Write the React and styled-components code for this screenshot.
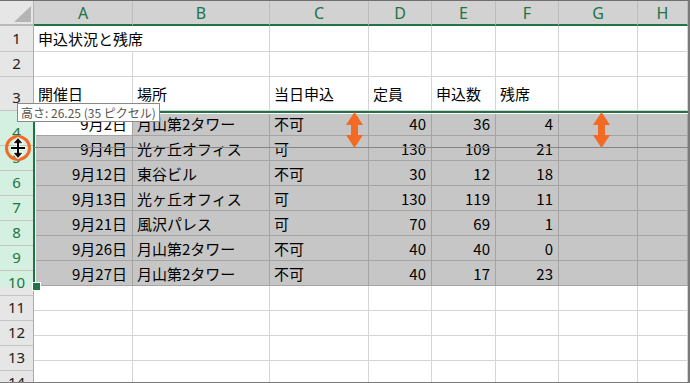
import React from "react";
import styled, { createGlobalStyle } from "styled-components";

const GREEN = "#217346";
const ORANGE = "#f26a24";
const COLS = "99px 137px 99px 63px 64px 63px 79px 1fr";

const Global = createGlobalStyle`
  html, body { margin: 0; padding: 0; background: #fff; }
  * { box-sizing: border-box; }
`;

const Frame = styled.div`
  position: relative;
  width: 690px;
  height: 383px;
  overflow: hidden;
  background: #fff;
  border-top: 1px solid #707070;
  border-right: 2px solid #7a7a7a;
  border-bottom: 1px solid #7a7a7a;
  font-family: "Noto Sans CJK JP", "Noto Sans", sans-serif;
`;

const HeaderRow = styled.div`
  display: grid;
  grid-template-columns: 34px ${COLS};
  height: 25px;
`;

const Corner = styled.div`
  display: flex;
  align-items: flex-end;
  justify-content: flex-end;
  padding: 0 2px 2px 0;
  background: #e6e6e6;
  border-right: 1px solid #b4b4b4;
  border-bottom: 2px solid #b9b9b9;
`;

const CornerTriangle = styled.div`
  width: 17px;
  height: 16px;
  background: #b4b4b4;
  clip-path: polygon(100% 0, 100% 100%, 0 100%);
`;

const ColHead = styled.div`
  display: flex;
  align-items: center;
  justify-content: center;
  background: #d2d2d2;
  border-right: 1px solid #bcbcbc;
  border-bottom: 2px solid ${GREEN};
  color: ${GREEN};
  font-family: "Noto Sans", sans-serif;
  font-size: 16px;
  line-height: 1;
  padding-top: 1px;
`;

const Body = styled.div`
  display: flex;
`;

const RowHeaders = styled.div`
  display: flex;
  flex-direction: column;
  width: 34px;
  flex: none;
`;

const RowHead = styled.div`
  display: flex;
  align-items: flex-end;
  justify-content: center;
  height: ${(p) => p.$h}px;
  flex: none;
  padding-bottom: 6px;
  border-right: 1px solid #ababab;
  border-bottom: 1px solid #c4c4c4;
  background: ${(p) =>
    p.$sel === "full"
      ? "#d3f0e0"
      : p.$sel === "partial"
      ? "linear-gradient(#d3f0e0 0 16px, #e6e6e6 16px)"
      : "#e6e6e6"};
  color: ${(p) => (p.$sel ? GREEN : "#222")};
  font-family: "Noto Sans", sans-serif;
  font-size: 15px;
  line-height: 14px;
`;

const DataArea = styled.div`
  flex: 1;
  display: flex;
  flex-direction: column;
`;

const DataRow = styled.div`
  display: grid;
  grid-template-columns: ${COLS};
  height: ${(p) => p.$h}px;
  flex: none;
`;

const SelectedBlock = styled.div`
  position: relative;
  display: flex;
  flex-direction: column;

  &::after {
    content: "";
    position: absolute;
    top: 0;
    left: -1px;
    right: -3px;
    bottom: -3px;
    border: 2px solid ${GREEN};
    box-shadow: inset 0 0 0 1px #fff;
    pointer-events: none;
  }
  &::before {
    content: "";
    position: absolute;
    left: -2px;
    bottom: -5px;
    width: 7px;
    height: 7px;
    background: ${GREEN};
    border: 1px solid #fff;
    z-index: 2;
  }
`;

const Cell = styled.div`
  display: flex;
  align-items: center;
  justify-content: ${(p) => (p.$num ? "flex-end" : "flex-start")};
  padding: 0 4px 0 4px;
  padding-right: ${(p) => (p.$num ? "5px" : "4px")};
  white-space: nowrap;
  overflow: visible;
  font-size: 15px;
  line-height: 1;
  color: #000;
  background: ${(p) => (p.$sel && !p.$active ? "#c6c6c6" : "#fff")};
  border-right: 1px solid
    ${(p) => (p.$spill ? "transparent" : p.$sel ? "#a4a4a4" : "#d4d4d4")};
  border-bottom: 1px solid ${(p) => (p.$sel ? "#a4a4a4" : "#d4d4d4")};
  position: relative;
  z-index: ${(p) => (p.$spill ? 1 : 0)};
`;

const DragLine = styled.div`
  position: absolute;
  left: 34px;
  right: 0;
  top: 146px;
  height: 1px;
  background: #858585;
`;

const Tooltip = styled.div`
  position: absolute;
  left: 17px;
  top: 102px;
  height: 19px;
  padding: 0 3px;
  display: flex;
  align-items: center;
  background: #fff;
  border: 1px solid #8a8a8a;
  color: #555;
  font-size: 12px;
  line-height: 1;
  white-space: nowrap;
  z-index: 5;
`;

const Marker = styled.svg`
  position: absolute;
  left: ${(p) => p.$x}px;
  top: ${(p) => p.$y}px;
  z-index: 6;
  overflow: visible;
`;

const headerLetters = ["A", "B", "C", "D", "E", "F", "G", "H"];

const topRows = [
  { h: 26, cells: [{ t: "申込状況と残席", spill: true }] },
  { h: 25, cells: [] },
  { h: 34, cells: ["開催日", "場所", "当日申込", "定員", "申込数", "残席"].map((t) => ({ t })) },
];

const data = [
  ["9月2日", "月山第2タワー", "不可", 40, 36, 4],
  ["9月4日", "光ヶ丘オフィス", "可", 130, 109, 21],
  ["9月12日", "東谷ビル", "不可", 30, 12, 18],
  ["9月13日", "光ヶ丘オフィス", "可", 130, 119, 11],
  ["9月21日", "風沢パレス", "可", 70, 69, 1],
  ["9月26日", "月山第2タワー", "不可", 40, 40, 0],
  ["9月27日", "月山第2タワー", "不可", 40, 17, 23],
];

const rowHeads = [
  { n: 1, h: 26 },
  { n: 2, h: 25 },
  { n: 3, h: 34 },
  { n: 4, h: 35, sel: "full" },
  { n: 5, h: 25, sel: "full" },
  { n: 6, h: 25, sel: "full" },
  { n: 7, h: 25, sel: "full" },
  { n: 8, h: 25, sel: "full" },
  { n: 9, h: 25, sel: "full" },
  { n: 10, h: 25, sel: "partial" },
  { n: 11, h: 25 },
  { n: 12, h: 25 },
  { n: 13, h: 25 },
  { n: 14, h: 25 },
];

function renderCells(cells, opts = {}) {
  return headerLetters.map((_, i) => {
    const c = cells[i];
    return (
      <Cell
        key={i}
        $sel={opts.sel}
        $active={opts.active && i === 0}
        $num={c && c.num}
        $spill={c && c.spill}
      >
        {c ? c.t : ""}
      </Cell>
    );
  });
}

const VArrow = ({ x, y }) => (
  <Marker $x={x} $y={y} width="17" height="36" viewBox="0 0 17 36">
    <path
      d="M8.5 0 L17 13 L12 13 L12 23 L17 23 L8.5 36 L0 23 L5 23 L5 13 L0 13 Z"
      fill={ORANGE}
    />
  </Marker>
);

export default function App() {
  return (
    <>
      <Global />
      <Frame>
        <HeaderRow>
          <Corner>
            <CornerTriangle />
          </Corner>
          {headerLetters.map((l) => (
            <ColHead key={l}>{l}</ColHead>
          ))}
        </HeaderRow>
        <Body>
          <RowHeaders>
            {rowHeads.map((r) => (
              <RowHead key={r.n} $h={r.h} $sel={r.sel}>
                {r.n}
              </RowHead>
            ))}
          </RowHeaders>
          <DataArea>
            {topRows.map((r, i) => (
              <DataRow key={i} $h={r.h}>
                {renderCells(r.cells)}
              </DataRow>
            ))}
            <SelectedBlock>
              {data.map((d, i) => (
                <DataRow key={i} $h={25}>
                  {renderCells(
                    [
                      { t: d[0], num: true },
                      { t: d[1] },
                      { t: d[2] },
                      { t: d[3], num: true },
                      { t: d[4], num: true },
                      { t: d[5], num: true },
                    ],
                    { sel: true, active: i === 0 }
                  )}
                </DataRow>
              ))}
            </SelectedBlock>
            {[0, 1, 2, 3].map((i) => (
              <DataRow key={"e" + i} $h={25}>
                {renderCells([])}
              </DataRow>
            ))}
          </DataArea>
        </Body>

        <DragLine />
        <Tooltip>高さ: 26.25 (35 ピクセル)</Tooltip>

        <VArrow x={346} y={111} />
        <VArrow x={593} y={111} />

        <Marker $x={4} $y={133} width="28" height="28" viewBox="0 0 28 28">
          <circle cx="14" cy="14" r="11.5" fill="none" stroke={ORANGE} strokeWidth="3" />
          <g stroke="#fff" strokeWidth="3" strokeLinejoin="round" fill="#fff">
            <path d="M14 4.5 L10 9 L18 9 Z" />
            <path d="M14 23.5 L10 19 L18 19 Z" />
            <path d="M14 8 L14 20" fill="none" />
            <path d="M7 14 L21 14" fill="none" />
          </g>
          <g fill="#000" stroke="#000">
            <path d="M14 4.5 L10.3 8.8 L17.7 8.8 Z" strokeWidth="0.6" />
            <path d="M14 23.5 L10.3 19.2 L17.7 19.2 Z" strokeWidth="0.6" />
            <path d="M14 8 L14 20" fill="none" strokeWidth="2" />
            <path d="M7 14 L21 14" fill="none" strokeWidth="2" />
          </g>
        </Marker>
      </Frame>
    </>
  );
}
